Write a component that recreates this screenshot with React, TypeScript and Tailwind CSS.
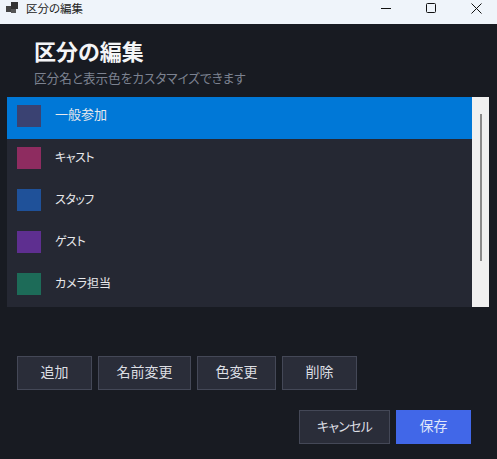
const font = "font-['Noto_Sans_CJK_JP','Noto_Sans',sans-serif] [font-feature-settings:'palt']";

const rows = [
  { name: "一般参加", swatch: "bg-[#3a4272]", text: "pb-[8px] text-[13px]", selected: true },
  { name: "キャスト", swatch: "bg-[#8e2c60]", text: "pb-[6px] text-[12px] tracking-[-0.5px]" },
  { name: "スタッフ", swatch: "bg-[#1f5199]", text: "pb-[6px] text-[12px] tracking-[-0.5px]" },
  { name: "ゲスト", swatch: "bg-[#5e2f90]", text: "pb-[6px] text-[12px] tracking-[-0.5px]" },
  { name: "カメラ担当", swatch: "bg-[#1d6b58]", text: "pb-[6px] text-[12px]" },
];

const ActionButton = ({ label, width, text = "text-[14px]" }: { label: string; width: string; text?: string }) => (
  <button
    className={`${width} ${text} h-[34px] border border-[#444857] bg-[#2a2d39] pb-[3px] text-[#dcdee3]`}
  >
    {label}
  </button>
);

export default function App() {
  return (
    <div className={`${font} flex h-[459px] w-[497px] flex-col bg-[#181b22]`}>
      <div className="relative flex h-6 items-start bg-[#eff4fa] text-[#222]">
        <svg width="26" height="16" viewBox="0 0 26 16" className="shrink-0">
          <rect x="6" y="6" width="5" height="6" fill="#444" />
          <rect x="11" y="2" width="7" height="7" fill="#333" />
          <rect x="11" y="9" width="5" height="4" fill="#555" />
        </svg>
        <span className="text-[11.5px] leading-4">区分の編集</span>
        <svg width="116" height="16" viewBox="0 0 116 16" className="ml-auto mr-[15px]" fill="none" stroke="#111">
          <path d="M15 8.5h10" />
          <rect x="60.5" y="3.5" width="9" height="9" rx="1" />
          <path d="M105.5 3.5l10 10M115.5 3.5l-10 10" />
        </svg>
      </div>

      <div className="px-[34px] pt-[10px]">
        <h1 className="text-[22px] leading-[32px] font-bold text-[#f4f5f7]">区分の編集</h1>
        <p className="text-[12.6px] leading-[24px] text-[#7c8290]">区分名と表示色をカスタマイズできます</p>
      </div>

      <div className="mr-[8px] ml-[7px] mt-[7px] flex h-[210px] bg-[#252833]">
        <div className="flex-1">
          {rows.map((row) => (
            <div
              key={row.name}
              className={`flex h-[42px] items-center pl-[10px] ${row.selected ? "bg-[#0078d7]" : ""}`}
            >
              <div className={`mb-[4px] h-[22px] w-6 ${row.swatch}`} />
              <span className={`ml-[14px] text-[#e8e9ec] ${row.text}`}>{row.name}</span>
            </div>
          ))}
        </div>
        <div className="w-[17px] bg-[#f0f0f0] pt-[17px] pl-2">
          <div className="h-[147px] w-[2px] bg-[#8a8a8a]" />
        </div>
      </div>

      <div className="mt-[49px] flex gap-[6px] pl-[17px]">
        <ActionButton label="追加" width="w-[75px]" />
        <ActionButton label="名前変更" width="w-[93px]" />
        <ActionButton label="色変更" width="w-[79px]" />
        <ActionButton label="削除" width="w-[75px]" />
      </div>

      <div className="mt-5 flex justify-end gap-[6px] pr-[26px]">
        <ActionButton label="キャンセル" width="w-[91px]" text="text-[13px] tracking-[-0.8px]" />
        <button className="h-[34px] w-[75px] bg-[#4167e8] pb-[3px] text-[14px] text-[#dfe5fa]">保存</button>
      </div>
    </div>
  );
}
